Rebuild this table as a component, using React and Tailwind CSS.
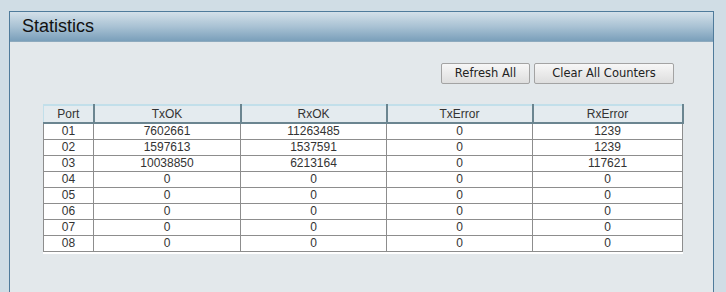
const rows = [
  ['01', '7602661', '11263485', '0', '1239'],
  ['02', '1597613', '1537591', '0', '1239'],
  ['03', '10038850', '6213164', '0', '117621'],
  ['04', '0', '0', '0', '0'],
  ['05', '0', '0', '0', '0'],
  ['06', '0', '0', '0', '0'],
  ['07', '0', '0', '0', '0'],
  ['08', '0', '0', '0', '0'],
]

const headers = ['Port', 'TxOK', 'RxOK', 'TxError', 'RxError']
const widths = ['w-[50px]', 'w-[147px]', 'w-[146px]', 'w-[146px]', 'w-[150px]']

const Button = ({ children, className = '' }) => (
  <button
    className={`h-[21px] rounded-[2px] border border-[#a3a3a3] bg-gradient-to-b from-[#f7f7f7] to-[#dedede] text-[11.5px] text-[#222] font-['DejaVu_Sans',Verdana,sans-serif] leading-none ${className}`}
  >
    {children}
  </button>
)

export default function App() {
  return (
    <div className="h-[292px] w-[726px] overflow-hidden bg-[#d0dde5] pt-[11px] pl-[9px] pr-[12px]">
      <div className="h-[300px] border-x border-t border-[#4f7b9b] bg-[#e3e8eb]">
        <div className="flex h-[30px] items-center bg-gradient-to-b from-[#d3e0e9] via-[#a9c2d4] to-[#7a9fba] pl-[12px] border-b border-[#8eaabe]">
          <span className="text-[18px] text-[#111] font-['Liberation_Sans',Arial,sans-serif]">Statistics</span>
        </div>

        <div className="flex justify-end gap-[4px] pt-[21px] pr-[39px]">
          <Button className="w-[89px]">Refresh All</Button>
          <Button className="w-[140px]">Clear All Counters</Button>
        </div>

        <div className="ml-[33px] mt-[20px] w-[640px] bg-white pr-[1px] pb-[2px]">
          <table className="w-[639px] table-fixed border-collapse font-['Liberation_Sans',Arial,sans-serif] text-[12px] text-[#333]">
            <thead>
              <tr>
                {headers.map((h, i) => (
                  <th
                    key={h}
                    className={`${widths[i]} h-[18px] border-t-2 border-l border-b-2 border-r-2 border-t-[#c2dfea] border-l-[#c2dfea] border-b-[#6b8590] border-r-[#6b8590] bg-[#e4ebef] p-0 text-center font-normal leading-none`}
                  >
                    {h}
                  </th>
                ))}
              </tr>
            </thead>
            <tbody>
              {rows.map((r) => (
                <tr key={r[0]}>
                  {r.map((c, i) => (
                    <td key={i} className="h-[16px] border border-[#8d8d8d] p-0 text-center leading-none">
                      {c}
                    </td>
                  ))}
                </tr>
              ))}
            </tbody>
          </table>
        </div>
      </div>
    </div>
  )
}
